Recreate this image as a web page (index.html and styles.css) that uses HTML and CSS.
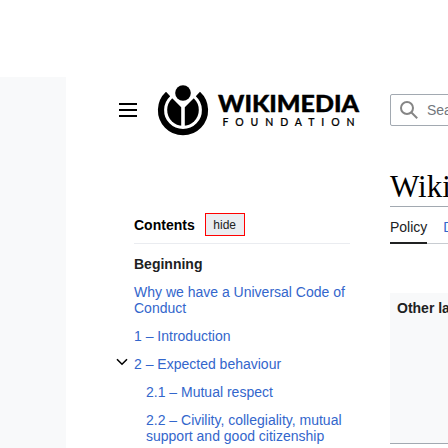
FILE: index.html
```
<!DOCTYPE html>
<html lang="en">
<head>
<meta charset="utf-8">
<title>Wikimedia Foundation</title>
<link rel="stylesheet" href="styles.css">
</head>
<body>
<div class="banner"></div>
<div class="page">
  <header class="header">
    <svg class="menu" width="18" height="14" viewBox="0 0 18 14"><path d="M0 0h18v2H0zM0 6h18v2H0zM0 12h18v2H0z"/></svg>
    <svg class="logo" width="204" height="52" viewBox="157 84 204 52">
      <path class="ring" d="M168.1 94a22 22 0 1 0 29.8 0"/>
      <circle cx="183" cy="110" r="15.8"/>
      <path class="cut" d="M181.2 127v-19.7L171 97V90h24v7L184.800 107.300V127z"/>
      <circle cx="183" cy="93" r="7.8"/>
      <text class="word" x="218" y="112" textLength="141" lengthAdjust="spacingAndGlyphs">WIKIMEDIA</text>
      <text class="sub" x="222.500" y="126" textLength="132">FOUNDATION</text>
    </svg>
    <div class="search">
      <svg width="20" height="20" viewBox="0 0 20 20"><circle cx="8" cy="8" r="6"/><path d="M12.2 12.2l6 6"/></svg>
      <span>Search</span>
    </div>
  </header>
  <div class="columns">
    <nav class="toc">
      <div class="toc-head"><b>Contents</b><button class="hide">hide</button></div>
      <ul>
        <li class="top">Beginning</li>
        <li>Why we have a Universal Code of<br>Conduct</li>
        <li>1 – Introduction</li>
        <li class="open"><svg width="12" height="8" viewBox="0 0 12 8"><path d="M1 1.2l5 5 5-5"/></svg>2 – Expected behaviour</li>
        <li class="nested">2.1 – Mutual respect</li>
        <li class="nested">2.2 – Civility, collegiality, mutual<br>support and good citizenship</li>
      </ul>
    </nav>
    <main class="content">
      <h1>Wikimedia</h1>
      <div class="tabs"><span class="active">Policy</span><span class="tab">Discussion</span></div>
      <div class="languages">Other languages:</div>
    </main>
  </div>
</div>
</body>
</html>
```
FILE: styles.css
```
* { box-sizing: border-box; }
body {
  margin: 0;
  width: 448px;
  height: 448px;
  overflow: hidden;
  background: #f8f9fa;
  font: 14px/16px "Liberation Sans", Arial, sans-serif;
  color: #202122;
}
.banner { height: 77px; background: #fff; }
.page {
  margin-left: 66px;
  height: 371px;
  background: #fff;
  overflow: hidden;
}
.header {
  display: flex;
  align-items: center;
  height: 66px;
  padding-left: 53px;
}
.menu, .logo, .search, .content { flex: none; }
.logo { margin: 0 29px 0 20px; }
.ring { fill: none; stroke: #000; stroke-width: 6.2; }
.cut { fill: #fff; }
.word { font: 900 23.5px Lato, sans-serif; stroke: #000; stroke-width: .4px; }
.sub { font: 500 10.5px Lato, sans-serif; stroke: #000; stroke-width: .2px; }
.search {
  display: flex;
  align-items: center;
  gap: 8px;
  width: 300px;
  height: 32px;
  padding-left: 8px;
  border: 1px solid #a2a9b1;
  border-radius: 2px;
  color: #72777d;
}
.search svg { fill: none; stroke: #858585; stroke-width: 2; }
.columns { display: flex; }
.toc { width: 216px; margin: 69px 40px 0 68px; flex: none; }
.toc-head {
  display: flex;
  align-items: center;
  height: 32px;
  padding-bottom: 7px;
  border-bottom: 1px solid #eaecf0;
  color: #000;
}
.toc-head b { padding-top: 2px; }
.hide {
  width: 40px;
  height: 23px;
  margin-left: 10px;
  padding: 2px 0 0;
  border: 1px solid #f00;
  background: #eaecf0;
  font: 12px/19px "Liberation Sans", Arial, sans-serif;
  color: #202122;
}
.toc ul { list-style: none; margin: 12px 0 0; padding: 0; }
.toc li { margin-bottom: 12px; color: #3366cc; white-space: nowrap; }
.toc .top { color: #202122; font-weight: bold; }
.toc .nested { padding-left: 12px; }
.open svg {
  margin: 0 6px 3px -18px;
  fill: none;
  stroke: #000;
  stroke-width: 1.6;
}
.content { width: 300px; }
h1 {
  height: 38px;
  margin: 26px 0 0;
  border-bottom: 1px solid #a2a9b1;
  font: 31px/36px "Liberation Serif", serif;
  color: #000;
}
.tabs {
  display: flex;
  gap: 16px;
  height: 37px;
  border-bottom: 1px solid #c8ccd1;
}
.tabs span { padding-top: 12px; }
.active { height: 37px; border-bottom: 2px solid #202122; }
.tab { color: #3366cc; }
.languages {
  height: 151px;
  margin-top: 49px;
  padding: 7px;
  border-bottom: 1px solid #a2a9b1;
  background: #f8f9fa;
  font-weight: bold;
}
```
